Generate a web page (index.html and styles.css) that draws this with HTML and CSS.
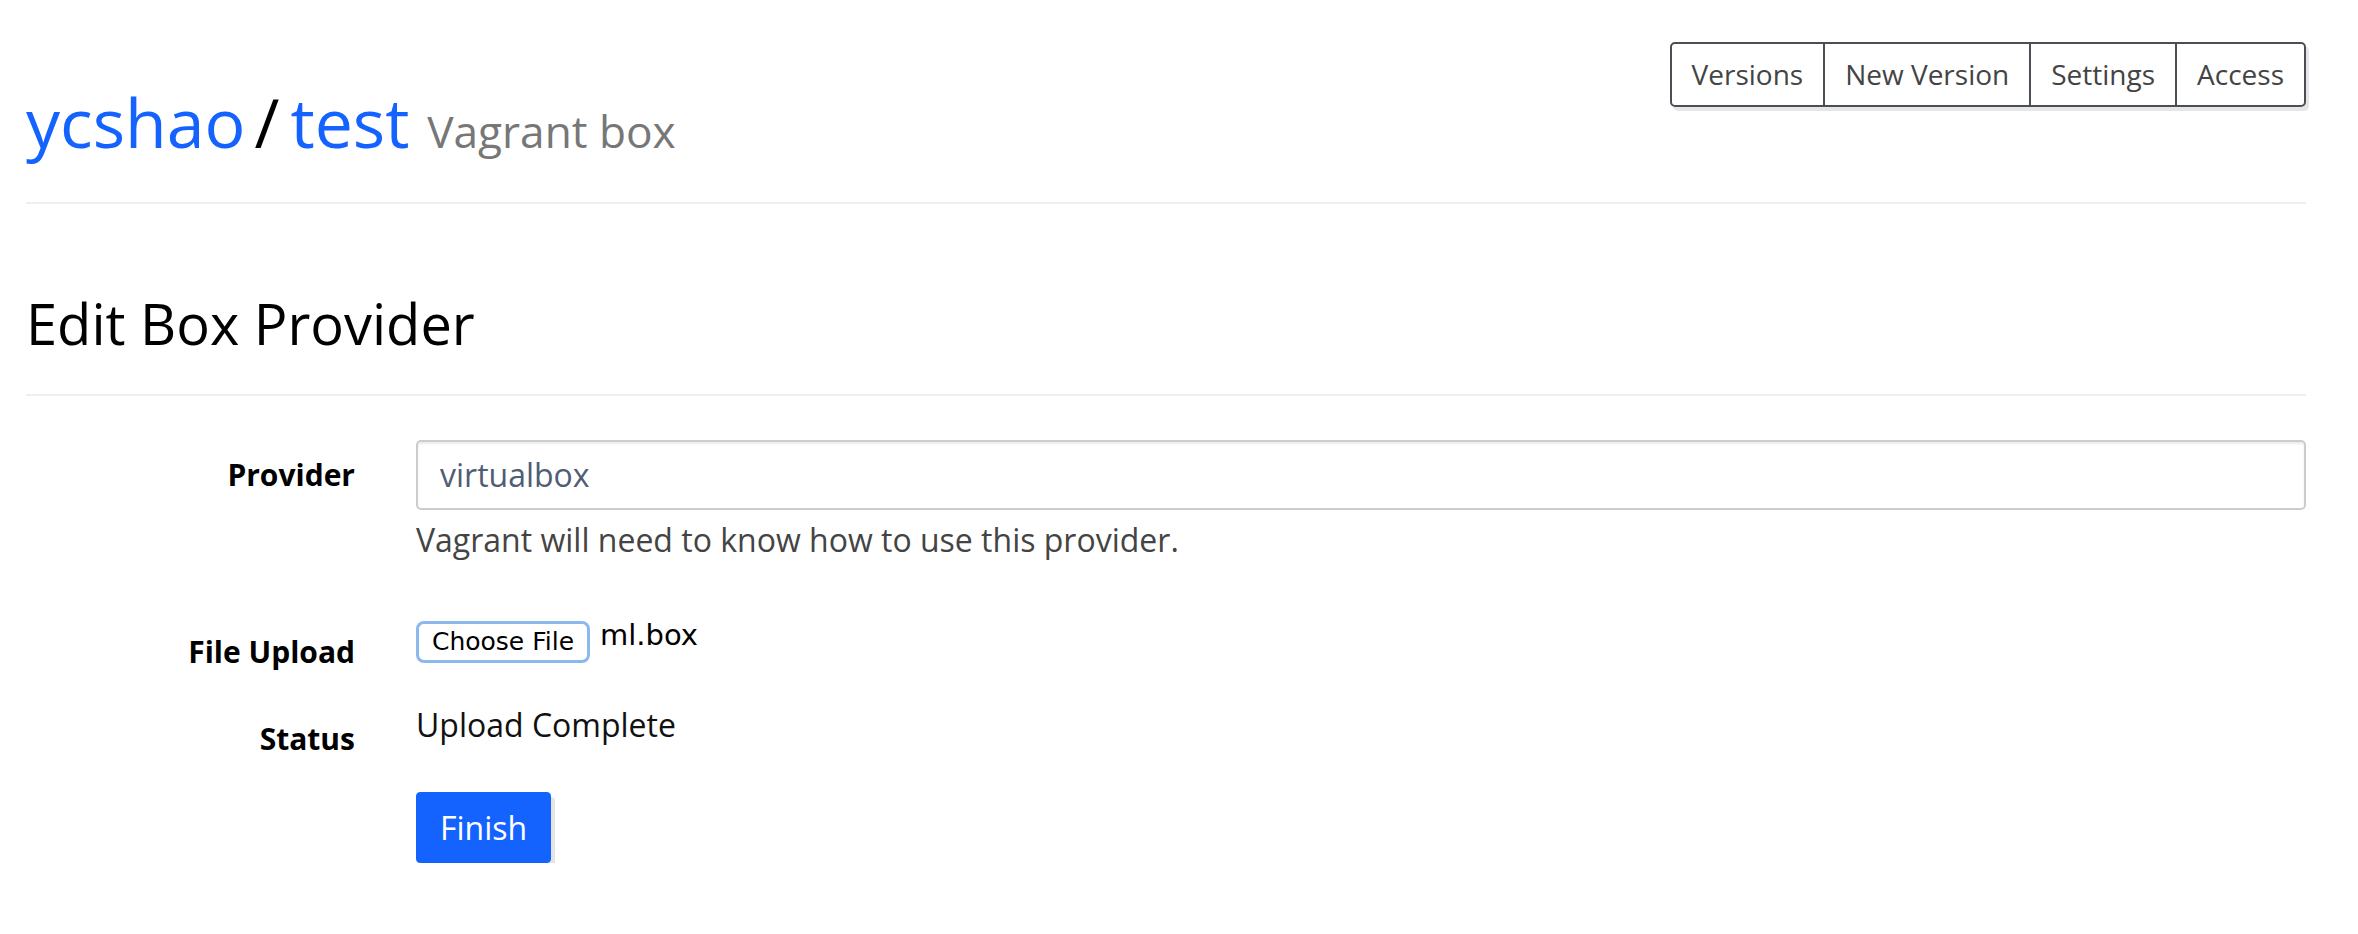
FILE: index.html
```html
<!DOCTYPE html>
<html lang="en">
<head>
<meta charset="utf-8">
<title>Edit Box Provider</title>
<link rel="stylesheet" href="styles.css">
</head>
<body>
<div class="page">
  <header class="page-header">
    <h1 class="title"><a class="link" href="#">ycshao</a><span class="sep">/</span><a class="link" href="#">test</a> <small class="subtitle">Vagrant box</small></h1>
    <nav class="btn-group">
      <a class="btn" href="#">Versions</a>
      <a class="btn" href="#">New Version</a>
      <a class="btn" href="#">Settings</a>
      <a class="btn" href="#">Access</a>
    </nav>
  </header>

  <h2 class="section-title">Edit Box Provider</h2>

  <form class="form">
    <div class="row row-provider">
      <label class="label">Provider</label>
      <div class="control">
        <div class="input">virtualbox</div>
        <p class="help">Vagrant will need to know how to use this provider.</p>
      </div>
    </div>
    <div class="row row-file">
      <label class="label">File Upload</label>
      <div class="control file">
        <span class="file-btn">Choose File</span>
        <span class="file-name">ml.box</span>
      </div>
    </div>
    <div class="row row-status">
      <label class="label">Status</label>
      <div class="control">
        <p class="static">Upload Complete</p>
      </div>
    </div>
    <div class="row row-actions">
      <div></div>
      <div class="control">
        <button type="button" class="btn-primary">Finish</button>
      </div>
    </div>
  </form>
</div>
</body>
</html>
```
FILE: styles.css
```css
* { box-sizing: border-box; }
html, body { margin: 0; padding: 0; background: #fff; }
body {
  font-family: "Open Sans", "DejaVu Sans", sans-serif;
  font-size: 32px;
  line-height: 42px;
  color: #222;
}
.page {
  width: 2280px;
  margin-left: 26px;
}

/* header */
.page-header {
  display: flex;
  justify-content: space-between;
  align-items: flex-start;
  border-bottom: 2px solid #eeeeee;
  padding-bottom: 40px;
}
.title {
  margin: 82px 0 0;
  font-size: 68px;
  line-height: 80px;
  font-weight: 400;
  color: #000;
}
.sep { margin: 0 11px 0 9px; }
.link { color: #1563ff; text-decoration: none; }
.subtitle { font-size: 44.2px; line-height: 1; color: #777; }

.btn-group {
  margin-top: 42px;
  display: flex;
  border: 2px solid #4a4e55;
  border-radius: 5px;
  box-shadow: 3px 4px 0 #e6e6e6;
  height: 65px;
}
.btn {
  display: block;
  padding: 0 20px;
  font-size: 28px;
  line-height: 61px;
  color: #444;
  text-decoration: none;
  border-left: 2px solid #4a4e55;
}
.btn:first-child { border-left: none; }

/* section */
.section-title {
  margin: 86px 0 0;
  font-size: 56px;
  line-height: 66px;
  font-weight: 400;
  color: #000;
  padding-bottom: 38px;
  border-bottom: 2px solid #eeeeee;
}

/* form */
.form { display: flex; flex-direction: column; }
.row {
  display: grid;
  grid-template-columns: 329px 1fr;
  column-gap: 61px;
}
.row-provider { margin-top: 44px; }
.row-file { margin-top: 56px; }
.row-status { margin-top: 31px; }
.row-actions { margin-top: 32px; }

.label {
  text-align: right;
  font-size: 30px;
  font-weight: 700;
  color: #000;
  padding-top: 14px;
  line-height: 42px;
}
.input {
  height: 70px;
  border: 2px solid #cccccc;
  border-radius: 5px;
  padding: 0 22px;
  line-height: 66px;
  color: #4f5d75;
  box-shadow: inset 0 2px 2px rgba(0,0,0,0.075);
}
.help {
  margin: 9px 0 0;
  color: #444;
}
.file { display: flex; align-items: flex-start; }
.file-btn {
  margin-top: 4px;
  width: 174px;
  height: 42px;
  border: 3px solid #8cb8ee;
  border-radius: 8px;
  font-family: "DejaVu Sans", sans-serif;
  font-size: 25px;
  line-height: 36px;
  text-align: center;
  color: #000;
  background: #fff;
}
.file-name {
  margin: 2px 0 0 10px;
  font-family: "DejaVu Sans", sans-serif;
  font-size: 29px;
  line-height: 32px;
  color: #000;
}
.static { margin: 0; color: #111; }
.btn-primary {
  justify-self: start;
  font-family: "Open Sans", sans-serif;
  font-size: 32px;
  line-height: 41px;
  padding: 14px 23px;
  color: #fff;
  background: #1563ff;
  border: 1px solid #1563ff;
  border-radius: 4px;
  box-shadow: 4px 5px 0 #e4e4e4;
}
```
